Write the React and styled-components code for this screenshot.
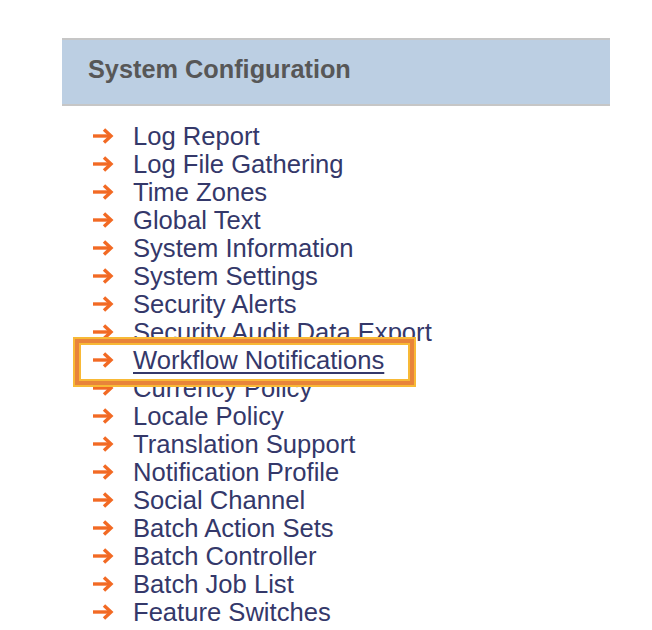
import React from 'react';
import styled, { createGlobalStyle } from 'styled-components';

const GlobalStyle = createGlobalStyle`
    body {
        margin: 0;
        background: #fff;
        font-family: "Liberation Sans", Arial, sans-serif;
    }
`;

const Page = styled.div`
    padding: 38px 0 0 62px;
    width: 548px;
`;

const Header = styled.div`
    height: 64px;
    display: flex;
    align-items: center;
    padding: 0 26px;
    background-color: #bccfe3;
    border-top: 2px solid #c6c6c6;
    border-bottom: 2px solid #c6c6c6;
    margin-bottom: 16px;
`;

const Title = styled.div`
    font-size: 25.3px;
    font-weight: 700;
    color: #575757;
    margin-top: -6px;
`;

const List = styled.ul`
    list-style: none;
    margin: 0;
    padding: 0 0 0 30px;
`;

const Row = styled.li`
    position: relative;
    display: flex;
    align-items: center;
    height: 28px;
    gap: 19px;
    z-index: ${({ $active }) => ($active ? 1 : 0)};

    ${({ $active }) =>
        $active &&
        `
        &::before {
            content: '';
            position: absolute;
            left: -19px;
            top: -9px;
            width: 343px;
            height: 50px;
            box-sizing: border-box;
            background: #fff;
            border: 2px solid #f8b936;
            box-shadow: inset 0 0 0 4px #e8843a, inset 0 0 0 6px #f8b936;
            z-index: -1;
        }
    `}
`;

const Label = styled.a`
    font-size: 25.6px;
    line-height: 28px;
    color: #34386a;
    text-decoration: ${({ $active }) => ($active ? 'underline' : 'none')};
    text-decoration-thickness: 2px;
    text-underline-offset: 3px;
    cursor: pointer;
`;

const Arrow = () => (
    <svg width="22" height="16" viewBox="0 0 22 16" style={{ flexShrink: 0 }}>
        <line x1="1" y1="8" x2="19" y2="8" stroke="#f26a24" strokeWidth="3.4" />
        <polyline
            points="12,1.5 19,8 12,14.5"
            fill="none"
            stroke="#f26a24"
            strokeWidth="3.4"
        />
    </svg>
);

const items = [
    'Log Report',
    'Log File Gathering',
    'Time Zones',
    'Global Text',
    'System Information',
    'System Settings',
    'Security Alerts',
    'Security Audit Data Export',
    'Workflow Notifications',
    'Currency Policy',
    'Locale Policy',
    'Translation Support',
    'Notification Profile',
    'Social Channel',
    'Batch Action Sets',
    'Batch Controller',
    'Batch Job List',
    'Feature Switches',
];

export default () => (
    <>
        <GlobalStyle />
        <Page>
            <Header>
                <Title>System Configuration</Title>
            </Header>
            <List>
                {items.map((item) => {
                    const active = item === 'Workflow Notifications';
                    return (
                        <Row key={item} $active={active}>
                            <Arrow />
                            <Label $active={active}>{item}</Label>
                        </Row>
                    );
                })}
            </List>
        </Page>
    </>
);
